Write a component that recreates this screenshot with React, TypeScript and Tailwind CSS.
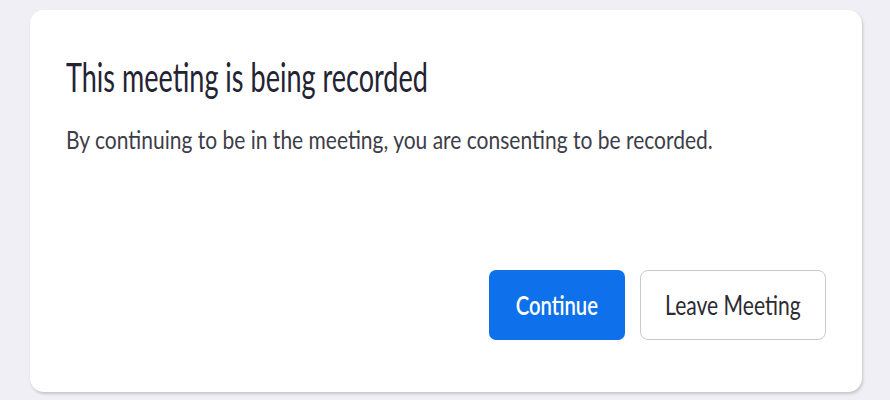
import React from "react";

export default function App() {
  return (
    <div className="w-[890px] h-[400px] bg-[#efeff5] pt-[10px] pl-[30px]" style={{ fontFamily: "Lato, 'Open Sans', sans-serif" }}>
      <div className="w-[832px] h-[382px] bg-white rounded-[14px] shadow-[1px_2px_3px_rgba(0,0,0,0.18)] flex flex-col px-[36px] pt-[43px] pb-[52px]">
        <h1 className="text-[40px] leading-[48px] text-[#232333] whitespace-nowrap">
          <span className="inline-block origin-left scale-x-[0.676]">This meeting is being recorded</span>
        </h1>
        <p className="mt-[23px] text-[25px] leading-[30px] text-[#3d3d48] whitespace-nowrap">
          <span className="inline-block origin-left scale-x-[0.84]">By continuing to be in the meeting, you are consenting to be recorded.</span>
        </p>
        <div className="mt-auto flex justify-end gap-[15px]">
          <button className="w-[136px] h-[70px] rounded-[7px] bg-[#0e71eb] text-white text-[27px] font-semibold flex items-center justify-center">
            <span className="inline-block scale-x-[0.75]">Continue</span>
          </button>
          <button className="w-[186px] h-[70px] rounded-[8px] border border-[#c9c9cf] bg-white text-[#2b2b33] text-[27px] flex items-center justify-center">
            <span className="inline-block scale-x-[0.78]">Leave Meeting</span>
          </button>
        </div>
      </div>
    </div>
  );
}
